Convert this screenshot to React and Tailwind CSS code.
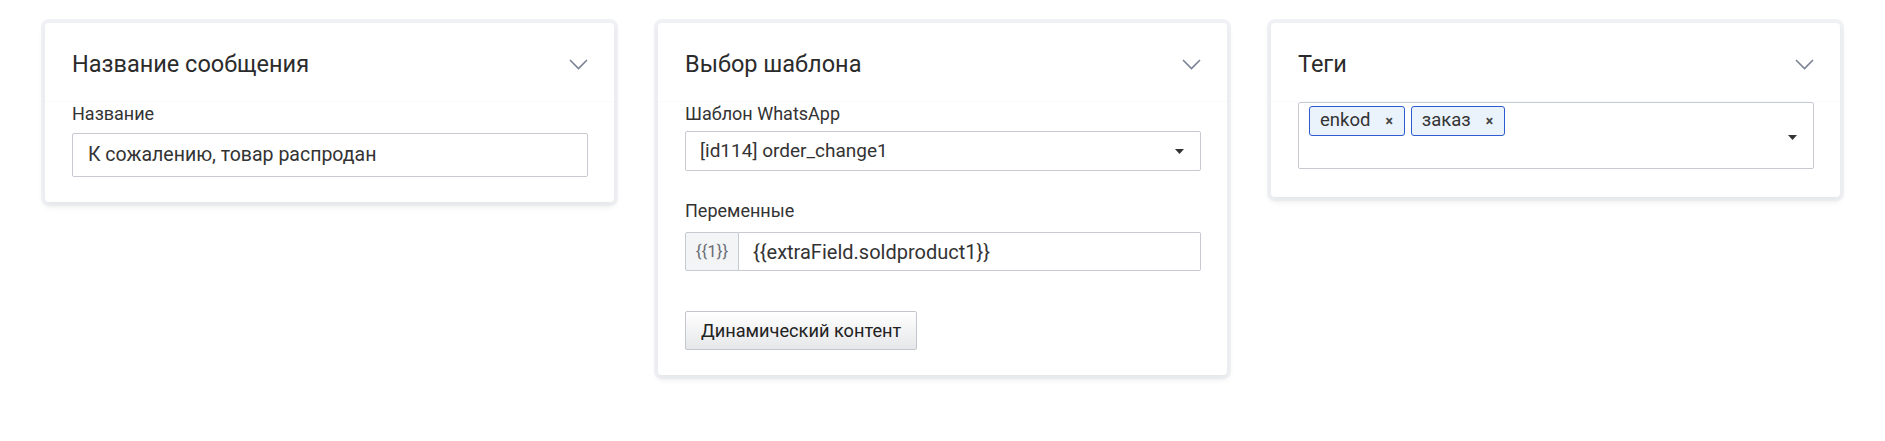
import React from 'react';

const font = { fontFamily: 'Roboto, "Liberation Sans", sans-serif' };

function Chevron() {
  return (
    <svg width="19" height="11" viewBox="0 0 19 11" fill="none" className="shrink-0">
      <path d="M1 1l8.5 8.5L18 1" stroke="#7a8294" strokeWidth="1.6" />
    </svg>
  );
}

function Caret() {
  return (
    <svg width="9" height="5" viewBox="0 0 9 5" className="shrink-0">
      <path d="M0 0h9L4.5 5z" fill="#333" />
    </svg>
  );
}

function Card({ title, children }) {
  return (
    <div className="bg-white rounded-[4px] shadow-[0_0_0_4px_rgba(232,234,240,0.6),0_3px_7px_rgba(0,0,0,0.14)]">
      <div className="flex items-center justify-between pl-[27px] pr-[26px] pt-[27px] pb-[23px] border-b border-[#f9fafb]">
        <h2 className="text-[23.5px] leading-[28px] text-[#2b2b2b]">{title}</h2>
        <Chevron />
      </div>
      <div className="pl-[27px] pr-[26px]">{children}</div>
    </div>
  );
}

function Label({ children }) {
  return <div className="text-[18px] leading-[24px] text-[#333]">{children}</div>;
}

export default function App() {
  return (
    <div className="bg-white min-h-[441px] pt-[23px] px-[45px]" style={font}>
      <div className="grid grid-cols-3 gap-[44px] items-start">
        <Card title="Название сообщения">
          <Label>Название</Label>
          <div className="mt-[7px] mb-[25px] h-[44px] border border-[#c7cad1] rounded-[2px] flex items-center px-[15px] text-[19.5px] text-[#333]">
            К сожалению, товар распродан
          </div>
        </Card>

        <Card title="Выбор шаблона">
          <Label>Шаблон WhatsApp</Label>
          <div className="mt-[5px] h-[40px] border border-[#c7cad1] rounded-[2px] flex items-center justify-between pl-[14px] pr-[16px] text-[19px] text-[#333]">
            <span>[id114] order_change1</span>
            <Caret />
          </div>
          <div className="mt-[28px]">
            <Label>Переменные</Label>
          </div>
          <div className="mt-[9px] h-[39px] flex">
            <div className="w-[54px] bg-[#f3f4f6] border border-[#c7cad1] rounded-l-[2px] flex items-center justify-center text-[17px] text-[#6b6f78]">
              {'{{1}}'}
            </div>
            <div className="flex-1 border border-l-0 border-[#c7cad1] rounded-r-[2px] flex items-center pl-[14px] text-[20px] text-[#333]">
              {'{{extraField.soldproduct1}}'}
            </div>
          </div>
          <button className="mt-[40px] mb-[25px] h-[39px] px-[15px] border border-[#c3c6cc] rounded-[2px] bg-gradient-to-b from-white to-[#e6e7ea] text-[18.2px] text-[#222]">
            Динамический контент
          </button>
        </Card>

        <Card title="Теги">
          <div className="mb-[28px] h-[67px] border border-[#c7cad1] rounded-[2px] flex items-start justify-between pl-[10px] pr-[16px] pt-[3px]">
            <div className="flex gap-[6px]">
              {['enkod', 'заказ'].map(t => (
                <span key={t} className="h-[30px] flex items-center gap-[15px] pl-[10px] pr-[11px] bg-[#eaf2fc] border border-[#2d5bd0] rounded-[3px] text-[18.5px] text-[#333]">
                  {t}
                  <span className="text-[14px] font-bold text-[#444]">×</span>
                </span>
              ))}
            </div>
            <div className="self-center">
              <Caret />
            </div>
          </div>
        </Card>
      </div>
    </div>
  );
}
